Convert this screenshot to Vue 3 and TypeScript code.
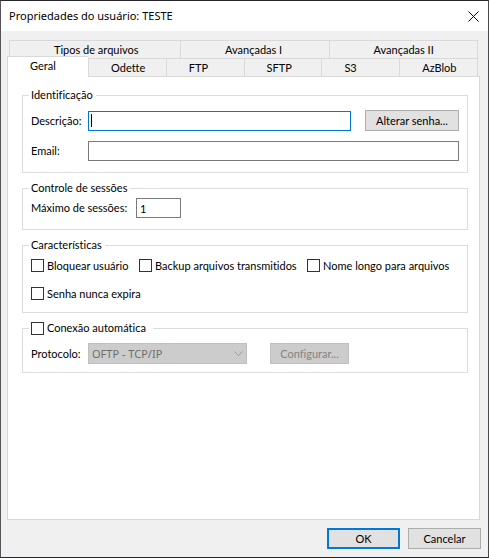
<script setup lang="ts">
import { ref } from 'vue'

interface Option {
  id: string
  label: string
}

const upperTabs: string[] = ['Tipos de arquivos', 'Avançadas I', 'Avançadas II']
const lowerTabs: string[] = ['Geral', 'Odette', 'FTP', 'SFTP', 'S3', 'AzBlob']
const activeTab = ref<string>('Geral')

const description = ref<string>('')
const email = ref<string>('')
const maxSessions = ref<string>('1')

const options: Option[] = [
  { id: 'block', label: 'Bloquear usuário' },
  { id: 'backup', label: 'Backup arquivos transmitidos' },
  { id: 'longname', label: 'Nome longo para arquivos' },
  { id: 'noexpire', label: 'Senha nunca expira' },
]
const selected = ref<string[]>([])
const autoConnect = ref<boolean>(false)
const protocol = ref<string>('OFTP - TCP/IP')
</script>

<template>
  <main class="dialog">
    <header class="titlebar">
      <h1>Propriedades do usuário: TESTE</h1>
      <button type="button" class="close" aria-label="Fechar">
        <svg width="11" height="11" viewBox="0 0 11 11" aria-hidden="true">
          <path d="M0.5 0.5L10.5 10.5M10.5 0.5L0.5 10.5" fill="none" stroke="#000" stroke-width="1" />
        </svg>
      </button>
    </header>

    <form class="content" @submit.prevent>
      <div class="tabs" role="tablist">
        <div class="tab-row upper">
          <button v-for="tab in upperTabs" :key="tab" type="button" role="tab" class="tab" :aria-selected="false">
            {{ tab }}
          </button>
        </div>
        <div class="tab-row lower">
          <button
            v-for="tab in lowerTabs"
            :key="tab"
            type="button"
            role="tab"
            class="tab"
            :class="{ active: tab === activeTab }"
            :aria-selected="tab === activeTab"
            @click="activeTab = tab"
          >
            {{ tab }}
          </button>
        </div>
      </div>

      <section class="panel" role="tabpanel">
        <fieldset class="identity">
          <legend>Identificação</legend>
          <div class="row">
            <label class="name" for="description">Descrição:</label>
            <div class="focus-field">
              <input id="description" v-model="description" class="box focused" type="text" />
              <span class="caret" aria-hidden="true"></span>
            </div>
            <button type="button" class="btn change">Alterar senha...</button>
          </div>
          <div class="row">
            <label class="name" for="email">Email:</label>
            <input id="email" v-model="email" class="box" type="text" />
          </div>
        </fieldset>

        <fieldset class="sessions">
          <legend>Controle de sessões</legend>
          <div class="row">
            <label class="name wide" for="sessions">Máximo de sessões:</label>
            <input id="sessions" v-model="maxSessions" class="box short" type="text" />
          </div>
        </fieldset>

        <fieldset class="features">
          <legend>Características</legend>
          <div class="checks">
            <label v-for="option in options" :key="option.id" class="check">
              <input v-model="selected" type="checkbox" :value="option.id" />{{ option.label }}
            </label>
          </div>
        </fieldset>

        <fieldset class="connection">
          <legend>
            <label class="check"><input v-model="autoConnect" type="checkbox" />Conexão automática</label>
          </legend>
          <div class="row">
            <label class="name" for="protocol">Protocolo:</label>
            <div class="select-wrap">
              <select id="protocol" v-model="protocol" :disabled="!autoConnect">
                <option>OFTP - TCP/IP</option>
              </select>
              <svg class="chevron" width="9" height="6" viewBox="0 0 9 6" aria-hidden="true">
                <path d="M0.5 0.5L4.5 4.5L8.5 0.5" fill="none" stroke="#9a9a9a" />
              </svg>
            </div>
            <button type="button" class="btn configure" :disabled="!autoConnect">Configurar...</button>
          </div>
        </fieldset>
      </section>

      <footer class="actions">
        <button type="submit" class="btn primary">OK</button>
        <button type="button" class="btn">Cancelar</button>
      </footer>
    </form>
  </main>
</template>

<style>
body {
  background: #f0f0f0;
}
</style>

<style scoped>
.dialog,
.dialog * {
  box-sizing: border-box;
}
.dialog {
  display: flex;
  flex-direction: column;
  min-height: 100vh;
  border: 1px solid #26262a;
  border-left-color: #555458;
  border-right-color: #48484c;
  background: #f0f0f0;
  color: #000;
  font: 11px/16px Lato, "Liberation Sans", sans-serif;
  font-variant-ligatures: none;
}
button,
input,
select {
  margin: 0;
  font: inherit;
  font-variant-ligatures: none;
  color: inherit;
  border-radius: 0;
}
.titlebar {
  display: flex;
  align-items: center;
  justify-content: space-between;
  height: 30px;
  padding: 0 9px 0 8px;
  background: #fff;
}
h1 {
  margin: 0;
  font-family: "Noto Sans", "Open Sans", sans-serif;
  font-size: 11px;
  font-weight: 400;
}
.close {
  display: flex;
  padding: 0;
  border: 0;
  background: none;
}
.content {
  display: flex;
  flex: 1;
  flex-direction: column;
  padding: 9px 7px 8px 6px;
}
.tabs {
  padding: 0 3px 0 0;
}
.tab-row {
  display: flex;
  height: 18px;
}
.upper {
  margin-left: 2px;
}
.tab {
  flex: 1;
  padding: 0;
  border: 1px solid #d9d9d9;
  border-width: 1px 0 0 1px;
  background: #f0f0f0;
  text-align: left;
  line-height: 17px;
}
.upper .tab {
  padding-left: 44px;
}
.upper .tab:first-child {
  flex: 0 0 171px;
}
.tab:last-child {
  border-right-width: 1px;
}
.lower .tab {
  padding-left: 22px;
}
.lower .tab.active {
  z-index: 1;
  flex: 0 0 81px;
  height: 21px;
  margin-top: -2px;
  padding-bottom: 3px;
  border-right: 0;
  background: #fff;
}
.panel {
  display: flex;
  flex: 1;
  flex-direction: column;
  gap: 7px;
  margin-right: 1px;
  padding: 10px 11px 16px 14px;
  border: 1px solid #d9d9d9;
  background: #fff;
}
fieldset {
  min-width: 0;
  margin: 0;
  padding: 0 8px;
  border: 1px solid #dcdcdc;
}
legend {
  height: 16px;
  margin-left: -2px;
  padding: 0 3px 0 2px;
}
.row {
  display: flex;
  align-items: center;
}
.name {
  flex: 0 0 57px;
  white-space: nowrap;
}
.name.wide {
  flex-basis: 105px;
}
.box {
  flex: 1;
  min-width: 0;
  width: 100%;
  height: 20px;
  padding: 0 3px;
  border: 1px solid #7a7a7a;
  outline: 0;
  background: #fff;
}
.box.short {
  flex: 0 0 45px;
}
.box.focused {
  display: block;
  border-color: #0078d7;
}
.focus-field {
  position: relative;
  flex: 1;
}
.caret {
  position: absolute;
  top: 3px;
  left: 3px;
  width: 1px;
  height: 13px;
  background: #000;
}
.identity {
  padding-top: 7px;
  padding-bottom: 11px;
}
.identity .row + .row {
  margin-top: 10px;
}
.sessions {
  padding-top: 2px;
  padding-bottom: 11px;
}
.features {
  padding-top: 6px;
  padding-bottom: 12px;
}
.connection {
  padding-top: 7px;
  padding-bottom: 8px;
}
.connection legend {
  padding-right: 7px;
}
.checks {
  display: grid;
  grid-template-columns: 108px 168px auto;
  row-gap: 15px;
}
.check {
  display: flex;
  align-items: center;
  gap: 3px;
  height: 13px;
  white-space: nowrap;
}
legend .check {
  height: 16px;
}
.check input {
  flex: none;
  appearance: none;
  width: 13px;
  height: 13px;
  border: 1px solid #333;
  background: #fff;
}
.check input:checked {
  background: #0078d7;
}
.btn {
  width: 73px;
  height: 21px;
  padding: 0;
  border: 1px solid #adadad;
  background: #e1e1e1;
  line-height: 19px;
}
.btn:disabled {
  border-color: #bfbfbf;
  background: #ccc;
  color: #838383;
}
.change {
  width: 94px;
  margin-left: 14px;
}
.configure {
  width: 79px;
  margin-left: 23px;
}
.primary {
  border: 2px solid #0078d7;
  line-height: 17px;
}
.select-wrap {
  position: relative;
  flex: 0 0 159px;
}
select {
  display: block;
  appearance: none;
  width: 100%;
  height: 21px;
  padding: 0 20px 0 3px;
  border: 1px solid #bfbfbf;
  background: #ccc;
  font-family: "Noto Sans", "Open Sans", sans-serif;
}
select:disabled {
  color: #6d6d6d;
  opacity: 1;
}
.chevron {
  position: absolute;
  top: 8px;
  right: 4px;
  pointer-events: none;
}
.actions {
  display: flex;
  justify-content: flex-end;
  gap: 8px;
  padding-top: 8px;
}
</style>
